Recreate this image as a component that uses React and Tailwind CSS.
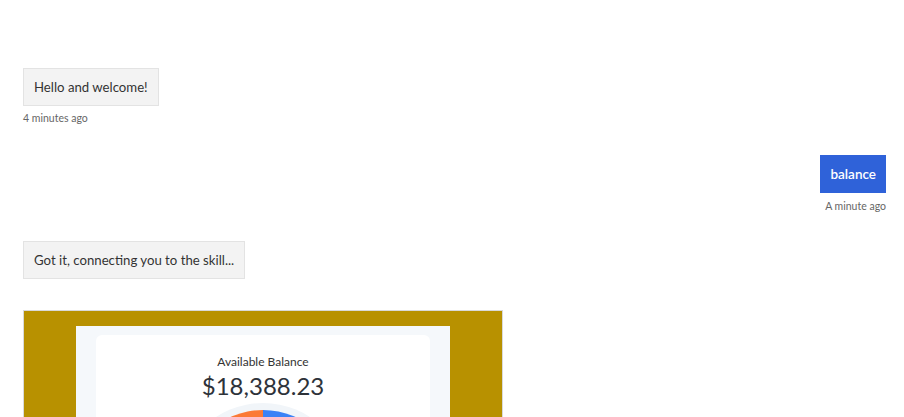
const chat = '"Segoe UI", "Lato", "Noto Sans", sans-serif'
const cardFont = '"Source Sans Pro", "Lato", "Noto Sans", sans-serif'

function BotBubble({ children, time }) {
  return (
    <div className="flex flex-col items-start">
      <div className="bg-[#f3f3f3] border border-[#e3e3e3] text-[#333] text-[13.2px] leading-[18px] px-[10px] py-[9px]">
        {children}
      </div>
      {time && <div className="text-[10.5px] text-[#666] mt-[6px] leading-[12px]">{time}</div>}
    </div>
  )
}

function BalanceDonut() {
  // orange / blue split of the spending wheel, only its top edge shows
  return (
    <svg width="180" height="20" viewBox="0 0 180 20" className="block">
      <circle cx="90" cy="88" r="86" fill="#f1f5f9" />
      <path d="M90 88 L90 9 A79 79 0 0 0 11 88 Z" fill="#fb7a36" />
      <path d="M90 88 L90 9 A79 79 0 0 1 169 88 Z" fill="#3b82f6" />
    </svg>
  )
}

export default function App() {
  return (
    <div className="w-[904px] h-[417px] overflow-hidden bg-white" style={{ fontFamily: chat }}>
      <div className="pl-[23px] pr-[18px] pt-[68px] flex flex-col">
        <BotBubble time="4 minutes ago">Hello and welcome!</BotBubble>

        <div className="flex flex-col items-end mt-[31px]">
          <div className="bg-[#2f62d9] border border-[#2f62d9] text-white text-[13.5px] font-semibold leading-[18px] px-[9px] py-[9px]">
            balance
          </div>
          <div className="text-[10.5px] text-[#666] mt-[7px] leading-[12px]">A minute ago</div>
        </div>

        <div className="mt-[29px]">
          <BotBubble>Got it, connecting you to the skill...</BotBubble>
        </div>

        <div className="mt-[31px] w-[480px] border border-[#d9d9d9] bg-[#b89100] px-[52px] pt-[15px]">
          <div className="bg-[#f5f8fb] px-[20px] pt-[9px] h-[120px]" style={{ fontFamily: cardFont }}>
            <div className="bg-white rounded-[6px] flex flex-col items-center pt-[19px] h-[140px]">
              <div className="text-[12px] text-[#333] leading-[16px]">Available Balance</div>
              <div className="text-[24px] text-[#2d3239] leading-[30px] mt-[1px]">$18,388.23</div>
              <BalanceDonut />
            </div>
          </div>
        </div>
      </div>
    </div>
  )
}
